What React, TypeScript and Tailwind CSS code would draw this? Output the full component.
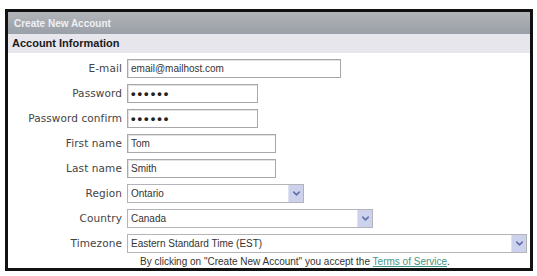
import { ChevronDown } from 'lucide-react';

type Field = {
  label: string;
  value: string;
  width: string;
  kind: 'text' | 'password' | 'select';
};

const fields: Field[] = [
  { label: 'E-mail', value: 'email@mailhost.com', width: 'w-[214px]', kind: 'text' },
  { label: 'Password', value: '••••••', width: 'w-[131px]', kind: 'password' },
  { label: 'Password confirm', value: '••••••', width: 'w-[131px]', kind: 'password' },
  { label: 'First name', value: 'Tom', width: 'w-[149px]', kind: 'text' },
  { label: 'Last name', value: 'Smith', width: 'w-[149px]', kind: 'text' },
  { label: 'Region', value: 'Ontario', width: 'w-[177px]', kind: 'select' },
  { label: 'Country', value: 'Canada', width: 'w-[246px]', kind: 'select' },
  { label: 'Timezone', value: 'Eastern Standard Time (EST)', width: 'w-[400px]', kind: 'select' },
];

function FieldBox({ field }: { field: Field }) {
  if (field.kind === 'select') {
    return (
      <div className={`${field.width} h-[19px] flex items-center border border-[#b4b4b8] bg-white`}>
        <span className="flex-1 pl-[3px] text-[10px] text-[#333]">{field.value}</span>
        <span className="w-[15px] h-[17px] flex items-center justify-center bg-[#cdd2ec] border-l border-[#dfe2f2]">
          <ChevronDown className="w-[11px] h-[11px] text-[#6470ac]" strokeWidth={3.5} />
        </span>
      </div>
    );
  }
  return (
    <div
      className={`${field.width} h-[19px] flex items-center border border-[#a8a8ac] bg-white shadow-[inset_1px_1px_0_#e2e2e2]`}
    >
      <span
        className={
          field.kind === 'password'
            ? 'pl-[3px] text-[13px] font-bold tracking-[2px] text-[#222]'
            : 'pl-[3px] text-[10px] text-[#333]'
        }
      >
        {field.value}
      </span>
    </div>
  );
}

export default function App() {
  return (
    <div className="w-[537px] h-[276px] bg-white pt-[9px] pl-[5px] font-['Liberation_Sans',Arial,sans-serif]">
      <div className="w-[528px] h-[262px] border-[3px] border-[#111] flex flex-col bg-white">
        <div className="h-[22px] flex items-center pl-[6px] bg-gradient-to-b from-[#b2b5b8] to-[#9a9fa8]">
          <span className="text-[10px] font-bold text-[#eef0f4]">Create New Account</span>
        </div>
        <div className="h-[19px] flex items-center pl-[4px] bg-[#e6e6ec]">
          <span className="text-[11px] font-bold text-[#1a1a1a]">Account Information</span>
        </div>
        <div className="flex flex-col gap-[6px] pt-[6px]">
          {fields.map((field) => (
            <div key={field.label} className="flex items-center gap-[5px]">
              <span className="w-[114px] text-right font-['DejaVu_Sans',Verdana,sans-serif] text-[10.5px] tracking-[0.1px] text-[#444]">
                {field.label}
              </span>
              <FieldBox field={field} />
            </div>
          ))}
        </div>
        <div className="pl-[132px] pt-[2px] text-[10px] leading-[13px] text-[#333]">
          By clicking on "Create New Account" you accept the{' '}
          <span className="text-[#3f9488] underline">Terms of Service</span>.
        </div>
      </div>
    </div>
  );
}
